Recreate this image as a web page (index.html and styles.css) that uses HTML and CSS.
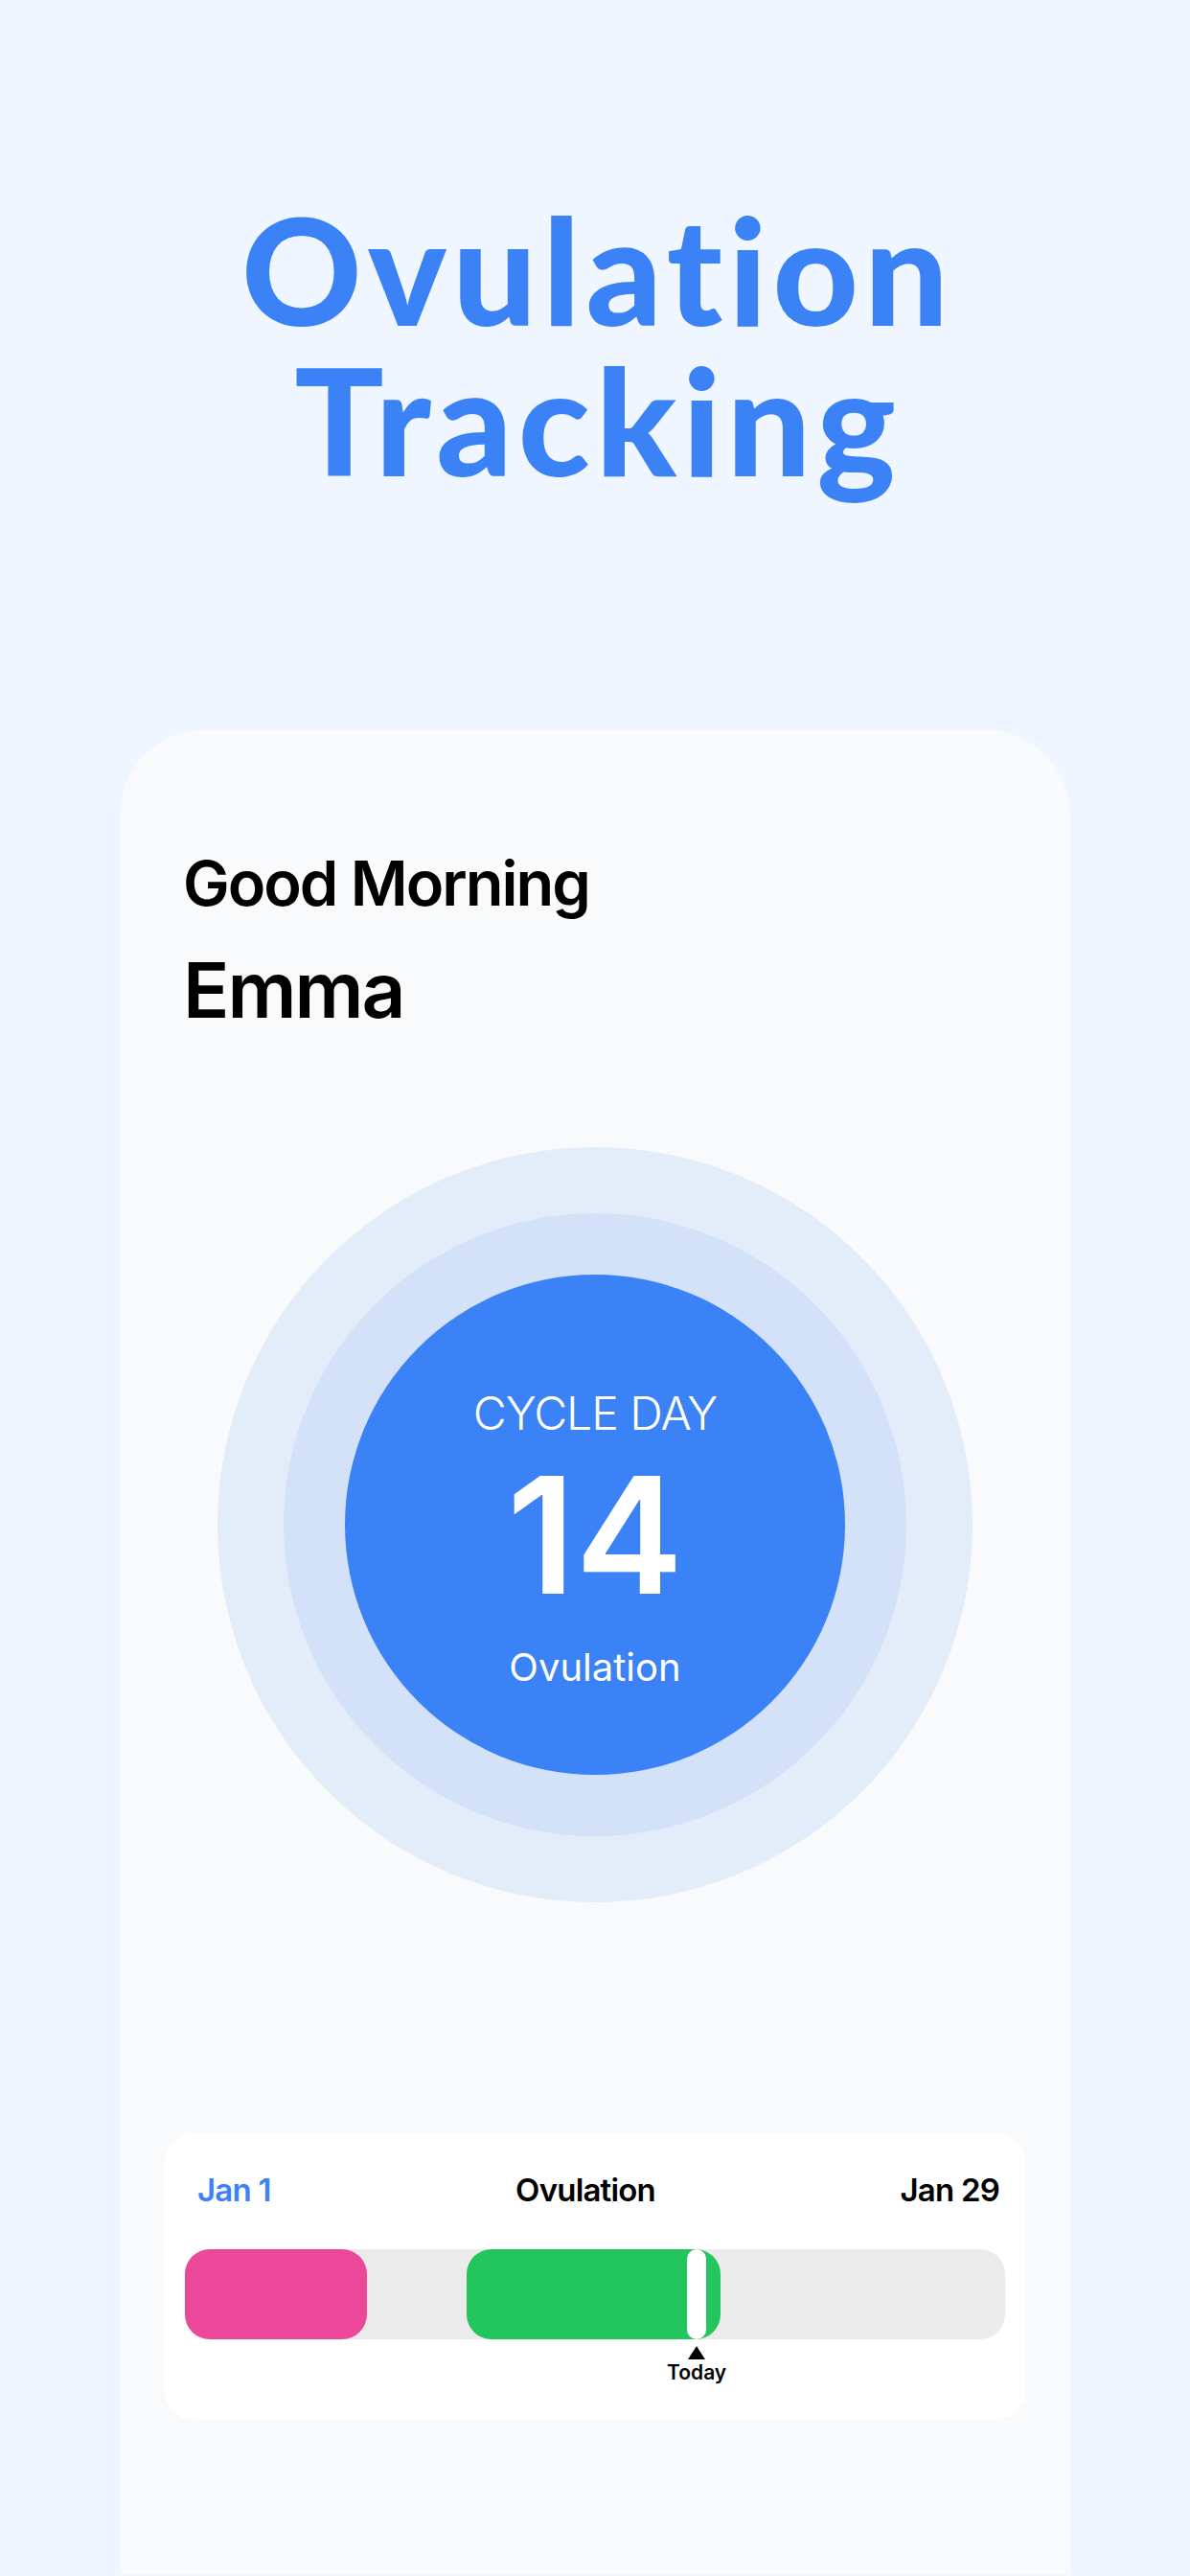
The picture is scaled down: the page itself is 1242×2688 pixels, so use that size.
FILE: index.html
```html
<!DOCTYPE html>
<html lang="en">
<head>
  <meta charset="UTF-8" />
  <meta name="viewport" content="width=device-width, initial-scale=1" />
  <title>Ovulation Tracking</title>
  <link rel="stylesheet" href="styles.css">
</head>
<body>
  <header class="hero">
    <h1>Ovulation<br>Tracking</h1>
  </header>

  <main class="phone">
    <div class="greeting">
      <p class="hello">Good Morning</p>
      <h2 class="name">Emma</h2>
    </div>

    <div class="cycle">
      <div class="ring ring-outer">
        <div class="ring ring-mid">
          <div class="ring ring-core">
            <span class="cycle-label">CYCLE DAY</span>
            <span class="cycle-day">14</span>
            <span class="cycle-phase">Ovulation</span>
          </div>
        </div>
      </div>
    </div>

    <section class="timeline" aria-label="Cycle timeline">
      <div class="timeline-head">
        <span class="start">Jan 1</span>
        <span class="phase">Ovulation</span>
        <span class="end">Jan 29</span>
      </div>
      <div class="track">
        <div class="seg seg-period" style="left: 0; width: 22.2%"></div>
        <div class="seg seg-fertile" style="left: 34.3%; width: 31%"></div>
        <div class="today" style="left: 62.4%">
          <span class="today-pin"></span>
          <span class="today-caret"></span>
          <span class="today-label">Today</span>
        </div>
      </div>
    </section>
  </main>
</body>
</html>
```

FILE: styles.css
```css
body {
  margin: 0;
  width: 1242px;
  height: 2688px;
  overflow: hidden;
  background: #eff6ff;
  font-family: Inter, "Noto Sans", sans-serif;
  color: #000;
}

.hero {
  padding-top: 202px;
  text-align: center;
}
.hero h1 {
  margin: 0;
  padding-left: 6px; /* balance trailing letter-spacing */
  font-family: Lato, "Open Sans", sans-serif;
  font-weight: 900;
  font-size: 155px;
  line-height: 157px;
  letter-spacing: 6px;
  color: #3b82f6;
}

.phone {
  margin: 245px 125px 0;
  height: 1926px;
  box-sizing: border-box;
  background: #f8fafc;
  border-radius: 90px 90px 0 0;
  padding-top: 128px;
  display: flex;
  flex-direction: column;
}

/* greeting */
.greeting {
  padding-left: 66px;
}
.hello {
  margin: 0;
  font-size: 65px;
  line-height: 1;
  font-weight: 600;
  letter-spacing: -2px;
}
.name {
  margin: 39px 0 0;
  font-size: 80px;
  line-height: 1;
  font-weight: 600;
  letter-spacing: -2px;
}

/* rings */
.cycle {
  display: flex;
  justify-content: center;
  margin-top: 124px;
}
.ring {
  border-radius: 50%;
  display: flex;
  align-items: center;
  justify-content: center;
}
.ring-outer {
  width: 788px;
  height: 788px;
  background: #e3edfa;
}
.ring-mid {
  width: 650px;
  height: 650px;
  background: #d3e2f9;
}
.ring-core {
  width: 522px;
  height: 522px;
  box-sizing: border-box;
  padding-top: 29px;
  background: #3b82f6;
  color: #fff;
  flex-direction: column;
}
.cycle-label {
  font-size: 48px;
  line-height: 1;
  font-weight: 300;
  letter-spacing: -1px;
}
.cycle-day {
  margin-top: 18px;
  font-size: 169px;
  line-height: 1;
  font-weight: 600;
}
.cycle-phase {
  margin-top: 34px;
  font-size: 40px;
  line-height: 1;
  font-weight: 400;
}

/* timeline card */
.timeline {
  margin: 241px 46px 0;
  height: 299px;
  box-sizing: border-box;
  padding: 43px 22px 0;
  background: #fff;
  border-radius: 32px;
}
.timeline-head {
  display: flex;
  justify-content: space-between;
  padding: 0 6px 0 13px;
  font-size: 33px;
  line-height: 1;
  font-weight: 600;
  letter-spacing: -0.8px;
}
.timeline-head .start {
  color: #3b82f6;
}
.track {
  position: relative;
  margin-top: 45px;
  height: 94px;
  background: #ebebeb;
  border-radius: 26px;
}
.seg {
  position: absolute;
  top: 0;
  bottom: 0;
  border-radius: 26px;
}
.seg-period {
  background: #ec4899;
}
.seg-fertile {
  background: #22c55e;
}
.today {
  position: absolute;
  top: 0;
  width: 0;
  display: flex;
  flex-direction: column;
  align-items: center;
}
.today-pin {
  flex: none;
  width: 20px;
  height: 94px;
  background: #fff;
  border-radius: 10px;
}
.today-caret {
  flex: none;
  margin-top: 7px;
  width: 0;
  height: 0;
  border-left: 9px solid transparent;
  border-right: 9px solid transparent;
  border-bottom: 14px solid #000;
}
.today-label {
  margin-top: 3px;
  font-size: 21px;
  line-height: 1;
  font-weight: 600;
}
```
